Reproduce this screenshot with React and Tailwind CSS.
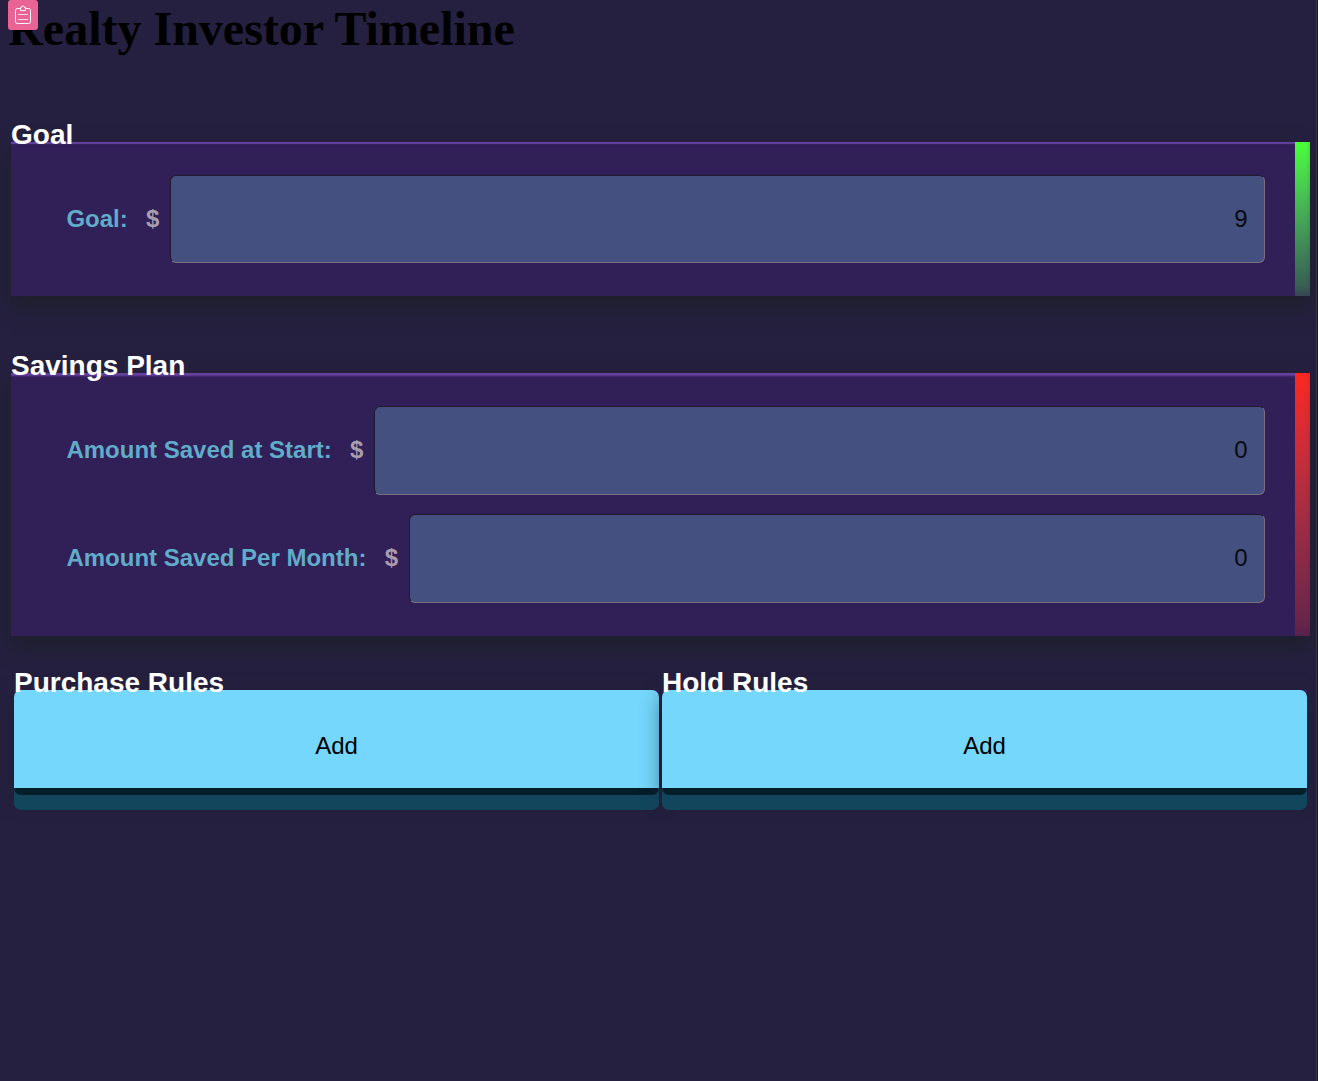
const sans = "font-['Liberation_Sans',Arial,sans-serif]";

function Field({ label, value, size = "h-[88px]" }) {
  return (
    <label className="flex items-center text-2xl">
      <span className="whitespace-nowrap pb-px pl-[0.4px] font-bold text-[#60acc9]">{label}</span>
      <span className="ml-[18.3px] mr-[11px] pb-px font-bold text-[#a99dad]">$</span>
      <input
        type="text"
        defaultValue={value}
        className={`min-w-0 flex-1 rounded-[6px] border border-t-[#201b2c] border-l-[#201b2c] border-r-[#767080] border-b-[#767080] bg-[#44507f] pr-[16.5px] text-right text-[#070b12] outline-none ${size}`}
      />
    </label>
  );
}

function Panel({ title, className, edge, bar, children }) {
  return (
    <section className={className}>
      <h2 className="relative z-10 -mb-[9px] h-[32px] text-[28px] leading-[31px] font-bold text-white">{title}</h2>
      <div className="flex shadow-[0_10px_20px_#1d202b]">
        <div className={`flex-1 bg-[#311f57] pt-[33px] pr-[30px] pl-[55px] ${edge}`}>
          <div className="flex flex-col gap-[19px]">{children}</div>
        </div>
        <div className={`w-[15px] bg-linear-to-b shadow-[inset_-3px_-8px_4px_-3px_#321f5740] ${bar}`} />
      </div>
    </section>
  );
}

function Rules({ title }) {
  return (
    <section className="flex-1">
      <h2 className="relative z-10 -mb-[8px] h-[32px] text-[28px] leading-[34px] font-bold text-white">{title}</h2>
      <div className="h-[105px] bg-linear-to-b from-[#3d2468] from-0% to-transparent to-[6px]">
        <button className="block h-[105px] w-full rounded-[7px] border-b-[7px] border-[#031e28] bg-[#75d7fb] pt-[13px] text-2xl text-black shadow-[0_15px_0_#12465d,0_5px_20px_#1b223099]">
          <span className="block">Add</span>
        </button>
      </div>
    </section>
  );
}

function ClipboardBadge() {
  return (
    <div className="absolute top-0 left-2 h-[30px] w-[30px] rounded-[3px] bg-[#e96494]">
      <svg width="30" height="30" viewBox="0 0 30 30" fill="none" stroke="white" strokeWidth="1">
        <path d="M12.5 8.5h-3q-2 0-2 2v11q0 2 2 2h11q2 0 2-2v-11q0-2-2-2h-3" />
        <path d="M12.5 7.5h1q0-1.5 1.5-1.5t1.5 1.5h1v3h-5z" />
        <path d="M10 14.5h10M10 19.5h10" strokeOpacity=".75" />
      </svg>
    </div>
  );
}

export default function App() {
  return (
    <main className={`relative h-[1081px] overflow-hidden bg-[#25203f] ${sans}`}>
      <h1 className="h-[118px] pl-[8.2px] font-['Liberation_Serif',serif] text-[48px] leading-[58px] font-bold text-black">
        Realty Investor Timeline
      </h1>
      <ClipboardBadge />
      <div className="w-[1310px] pl-[11px]">
        <Panel title="Goal" className="h-[232px] pt-px" edge="h-[154px] shadow-[inset_0_3px_1px_-1px_#6542a0]" bar="h-[154px] from-[#4aff38] to-[#365552]">
          <Field label="Goal:" value="9" />
        </Panel>
        <Panel title="Savings Plan" className="h-[316px]" edge="h-[263px] shadow-[inset_0_4px_2px_-1px_#6542a0]" bar="h-[263px] from-[#fb281e] to-[#62234b]">
          <Field label="Amount Saved at Start:" value="0" size="h-[89px] pb-px" />
          <Field label="Amount Saved Per Month:" value="0" size="h-[89px] pb-px" />
        </Panel>
        <div className="flex gap-[3px] px-[3px]">
          <Rules title="Purchase Rules" />
          <Rules title="Hold Rules" />
        </div>
      </div>
      <div className="absolute top-0 right-0 h-full w-[2px] border-l border-[#38353d] bg-[#1c1a21]" />
    </main>
  );
}
